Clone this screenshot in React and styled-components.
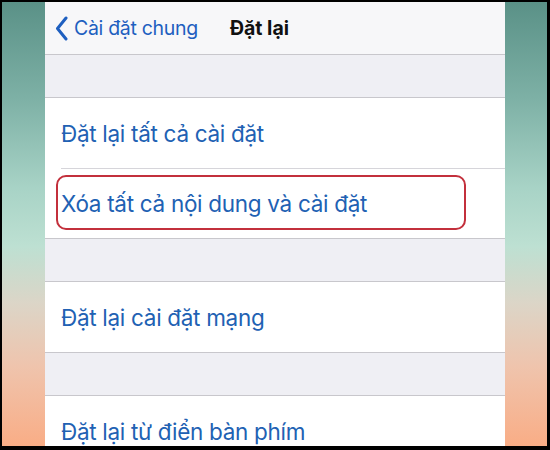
import React from "react";
import styled, { createGlobalStyle } from "styled-components";

const Global = createGlobalStyle`
  html, body { margin: 0; padding: 0; background: #000; }
  body { font-family: Inter, "Noto Sans", sans-serif; }
`;

const Frame = styled.div`
  width: 550px;
  height: 450px;
  box-sizing: border-box;
  padding: 2px 3px 4px 2px;
  background: #000;
`;

const Backdrop = styled.div`
  height: 100%;
  display: flex;
  justify-content: center;
  padding: 0 42px 0 43px;
  background: linear-gradient(
    180deg,
    #5a9187 0%,
    #7eb1a6 22%,
    #a8d3c6 42%,
    #bde0d2 55%,
    #dcd5c7 68%,
    #efc4ad 82%,
    #f9ad86 100%
  );
`;

const Phone = styled.div`
  flex: 1;
  display: flex;
  flex-direction: column;
  background: #efeff4;
  overflow: hidden;
`;

const NavBar = styled.div`
  height: 52px;
  flex: none;
  display: flex;
  align-items: center;
  padding-left: 10px;
  background: #f7f7f9;
  border-bottom: 1px solid #c8c7cc;
`;

const BackButton = styled.div`
  display: flex;
  align-items: center;
  gap: 6px;
  color: #1e5fc0;
  font-size: 19.5px;
  letter-spacing: -0.3px;
`;

const Title = styled.div`
  margin-left: 32px;
  font-size: 19.5px;
  font-weight: 700;
  color: #111;
`;

const Gap = styled.div`
  height: 42px;
  flex: none;
  border-bottom: 1px solid #c8c7cc;
`;

const Group = styled.div`
  background: #fff;
  border-bottom: 1px solid #c8c7cc;
  flex: none;
`;

const Row = styled.div`
  height: 70px;
  display: flex;
  align-items: center;
  padding-left: 16px;
  position: relative;
  box-sizing: border-box;
  & + &::before {
    content: "";
    position: absolute;
    top: 0;
    left: 16px;
    right: 0;
    border-top: 1px solid #d6d5da;
  }
`;

const RowText = styled.span`
  font-size: 22.5px;
  color: #2161b3;
  letter-spacing: -0.3px;
`;

const Highlight = styled.div`
  position: absolute;
  left: 11px;
  top: 7px;
  width: 410px;
  height: 55px;
  border: 2px solid #c3303c;
  border-radius: 10px;
  box-sizing: border-box;
`;

const LastGroup = styled(Group)`
  flex: 1;
  border-bottom: none;
`;

export default function App() {
  return (
    <>
      <Global />
      <Frame>
        <Backdrop>
          <Phone>
            <NavBar>
              <BackButton>
                <svg width="13" height="25" viewBox="0 0 13 25">
                  <path
                    d="M11 2 L2.5 12.5 L11 23"
                    fill="none"
                    stroke="#1e5fc0"
                    strokeWidth="3"
                    strokeLinecap="round"
                    strokeLinejoin="round"
                  />
                </svg>
                Cài đặt chung
              </BackButton>
              <Title>Đặt lại</Title>
            </NavBar>
            <Gap />
            <Group>
              <Row>
                <RowText>Đặt lại tất cả cài đặt</RowText>
              </Row>
              <Row>
                <Highlight />
                <RowText>Xóa tất cả nội dung và cài đặt</RowText>
              </Row>
            </Group>
            <Gap />
            <Group>
              <Row>
                <RowText>Đặt lại cài đặt mạng</RowText>
              </Row>
            </Group>
            <Gap />
            <LastGroup>
              <Row>
                <RowText>Đặt lại từ điển bàn phím</RowText>
              </Row>
            </LastGroup>
          </Phone>
        </Backdrop>
      </Frame>
    </>
  );
}
